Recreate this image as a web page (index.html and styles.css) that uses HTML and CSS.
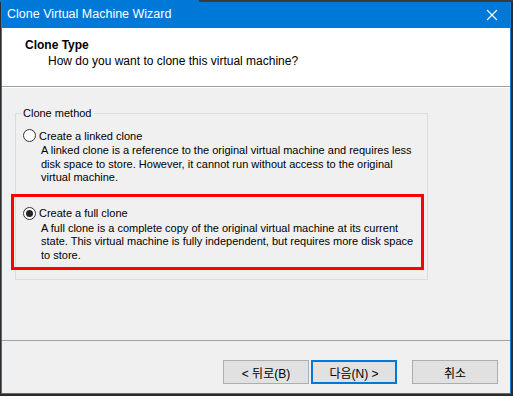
FILE: index.html
```html
<!DOCTYPE html>
<html lang="en">
  <head>
    <meta charset="UTF-8" />
    <meta name="viewport" content="width=device-width, initial-scale=1.0" />
    <title>Clone Virtual Machine Wizard</title>
    <link rel="stylesheet" href="styles.css">
  </head>
  <body>
    <div class="top-edge">
      <div class="top-edge-blue"></div>
      <div class="top-edge-dark"></div>
    </div>
    <div class="window">
      <div class="titlebar">
        <span class="title">Clone Virtual Machine Wizard</span>
        <svg class="close" width="12" height="12" viewBox="0 0 12 12">
          <path d="M1 1 L11 11 M11 1 L1 11" stroke="#fff" stroke-width="1.2" />
        </svg>
      </div>
      <div class="header">
        <div class="header-title">Clone Type</div>
        <div class="header-sub">How do you want to clone this virtual machine?</div>
      </div>
      <div class="content">
        <fieldset class="group">
          <legend>Clone method</legend>
          <div class="option">
            <div class="option-label"><span class="radio"></span>Create a linked clone</div>
            <div class="option-desc">A linked clone is a reference to the original virtual machine and requires less disk space to store. However, it cannot run without access to the original virtual machine.</div>
          </div>
          <div class="option highlight">
            <div class="option-label"><span class="radio checked"></span>Create a full clone</div>
            <div class="option-desc">A full clone is a complete copy of the original virtual machine at its current state. This virtual machine is fully independent, but requires more disk space to store.</div>
          </div>
        </fieldset>
      </div>
      <div class="footer">
        <button class="btn">&lt; 뒤로(B)</button>
        <button class="btn default">다음(N) &gt;</button>
        <button class="btn cancel">취소</button>
      </div>
    </div>
  </body>
</html>
```

FILE: styles.css
```css
body {
  margin: 0;
  background-color: #2b2b2b;
  font-family: "Liberation Sans", "Noto Sans CJK KR", sans-serif;
  font-size: 11px;
  color: #000;
}
.top-edge {
  display: flex;
  height: 2px;
}
.top-edge-blue {
  width: 199px;
  background-color: #0078d7;
}
.top-edge-dark {
  flex: 1;
  background-color: #3a3a3a;
}
.window {
  width: 508px;
  height: 391px;
  margin-left: 1px;
  border: 1px solid #1a7fd4;
  border-top: none;
  background-color: #f0f0f0;
  display: flex;
  flex-direction: column;
}
.titlebar {
  height: 26px;
  background-color: #0078d7;
  display: flex;
  align-items: center;
  justify-content: space-between;
  padding: 0 10px 0 5px;
  color: #fff;
}
.title {
  font-size: 12.5px;
  padding-bottom: 2px;
}
.close {
  margin-right: 2px;
}
.header {
  height: 59px;
  background-color: #fff;
  border-bottom: 1px solid #a0a0a0;
  box-shadow: 0 1px 0 #fff;
  padding: 10px 0 0 23px;
  box-sizing: border-box;
}
.header-title {
  font-weight: bold;
  font-size: 12px;
}
.header-sub {
  font-size: 12px;
  padding-left: 23px;
  margin-top: 2px;
}
.content {
  flex: 1;
  padding: 20px 0 0 13px;
}
.group {
  width: 413px;
  height: 173px;
  box-sizing: border-box;
  margin: 0;
  border: 1px solid #dcdcdc;
  padding: 10px 0 0 0;
}
.group legend {
  padding: 0 2px;
  margin-left: 5px;
}
.option {
  margin-left: 7px;
  padding-bottom: 9px;
}
.option-label {
  display: flex;
  align-items: center;
  gap: 3px;
}
.radio {
  width: 11px;
  height: 11px;
  border: 1px solid #333;
  border-radius: 50%;
  background-color: #fff;
  display: inline-flex;
  align-items: center;
  justify-content: center;
}
.radio.checked::after {
  content: "";
  width: 7px;
  height: 7px;
  border-radius: 50%;
  background-color: #222;
}
.option-desc {
  margin-left: 18px;
  width: 381px;
  line-height: 13.5px;
  margin-top: 2px;
}
.highlight {
  margin-left: -5px;
  padding: 10px 0 5px 9px;
  border: 3px solid #f00;
  width: 398px;
}
.footer {
  height: 53px;
  border-top: 1px solid #a0a0a0;
  display: flex;
  align-items: flex-start;
  padding-top: 19px;
  box-sizing: border-box;
  padding-left: 221px;
  gap: 2px;
}
.btn {
  width: 86px;
  height: 24px;
  background-color: #e1e1e1;
  border: 1px solid #adadad;
  font-family: "Liberation Sans", "Noto Sans CJK KR", sans-serif;
  font-size: 12px;
  padding: 0;
}
.btn.default {
  border: 2px solid #0078d7;
}
.btn.cancel {
  margin-left: 13px;
}
```
